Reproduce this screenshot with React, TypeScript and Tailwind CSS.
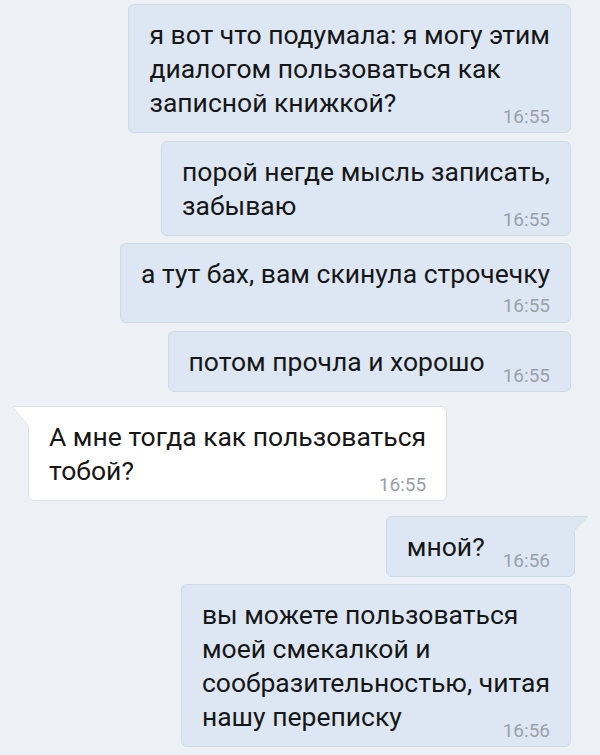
type Msg = {
  lines: string[];
  time: string;
  out: boolean;
  stamp: 'inline' | 'below';
  tail?: boolean;
  gapTop: string;
};

const messages: Msg[] = [
  {
    lines: ['я вот что подумала: я могу этим', 'диалогом пользоваться как', 'записной книжкой?'],
    time: '16:55',
    out: true,
    stamp: 'inline',
    gapTop: 'mt-[4px]',
  },
  {
    lines: ['порой негде мысль записать,', 'забываю'],
    time: '16:55',
    out: true,
    stamp: 'inline',
    gapTop: 'mt-[8px]',
  },
  {
    lines: ['а тут бах, вам скинула строчечку'],
    time: '16:55',
    out: true,
    stamp: 'below',
    gapTop: 'mt-[7px]',
  },
  {
    lines: ['потом прочла и хорошо'],
    time: '16:55',
    out: true,
    stamp: 'inline',
    gapTop: 'mt-[8px]',
  },
  {
    lines: ['А мне тогда как пользоваться', 'тобой?'],
    time: '16:55',
    out: false,
    stamp: 'inline',
    tail: true,
    gapTop: 'mt-[14px]',
  },
  {
    lines: ['мной?'],
    time: '16:56',
    out: true,
    stamp: 'inline',
    tail: true,
    gapTop: 'mt-[15px]',
  },
  {
    lines: ['вы можете пользоваться', 'моей смекалкой и', 'сообразительностью, читая', 'нашу переписку'],
    time: '16:56',
    out: true,
    stamp: 'inline',
    gapTop: 'mt-[7px]',
  },
];

function Stamp({ time, className = '' }: { time: string; className?: string }) {
  return (
    <span className={`block shrink-0 text-[19px] leading-[18px] text-[#98a1aa] ${className}`}>{time}</span>
  );
}

function Bubble({ m }: { m: Msg }) {
  const head = m.lines.slice(0, -1);
  const last = m.lines[m.lines.length - 1];

  const bubbleClass = m.out
    ? 'bg-[#dde7f3] border border-[#cfd9e5]'
    : 'bg-white border border-[#dde2e8]';

  return (
    <div className={`relative flex ${m.out ? 'justify-end' : 'justify-start'} ${m.gapTop}`}>
      <div
        className={`relative rounded-[6px] pt-[13px] pb-[6px] pl-[20px] ${bubbleClass} ${
          m.out ? (m.tail ? 'mr-[25px] pr-[24px]' : 'mr-[29px] pr-[20px]') : 'ml-[28px] pr-[20px] rounded-tl-none'
        }`}
      >
        {m.tail && m.out && (
          <svg className="absolute -right-[14px] -top-px" width="15" height="16" viewBox="0 0 15 16">
            <path d="M0 0.5 L13.5 0.5 Q14.5 0.8 13.8 1.8 L0 15.5 Z" fill="#dde7f3" stroke="#cfd9e5" strokeWidth="1" />
            <rect x="0" y="1" width="1.5" height="15" fill="#dde7f3" />
          </svg>
        )}
        {m.tail && !m.out && (
          <svg className="absolute -left-[17px] -top-px" width="18" height="22" viewBox="0 0 18 22">
            <path d="M18 0.5 L1.5 0.5 Q0.4 0.8 1.2 1.8 L18 21.5 Z" fill="#ffffff" stroke="#dde2e8" strokeWidth="1" />
            <rect x="16.5" y="1" width="1.5" height="21" fill="#ffffff" />
          </svg>
        )}
        {head.map((l) => (
          <div key={l} className="leading-[34px] whitespace-nowrap">
            {l}
          </div>
        ))}
        {m.stamp === 'inline' ? (
          <div className="flex items-end gap-[18px]">
            <span className="block leading-[34px] whitespace-nowrap pb-[6px]">{last}</span>
            <Stamp time={m.time} className="ml-auto" />
          </div>
        ) : (
          <div className="flex flex-col">
            <span className="block leading-[34px] whitespace-nowrap">{last}</span>
            <Stamp time={m.time} className="self-end mt-[6px] mb-px" />
          </div>
        )}
      </div>
    </div>
  );
}

export default function App() {
  return (
    <div
      className="w-[600px] h-[755px] overflow-hidden bg-[#edf0f4] text-[26.5px] text-[#161616]"
      style={{ fontFamily: 'Roboto, "Noto Sans", sans-serif' }}
    >
      <div className="flex flex-col">
        {messages.map((m, i) => (
          <Bubble key={i} m={m} />
        ))}
      </div>
    </div>
  );
}
